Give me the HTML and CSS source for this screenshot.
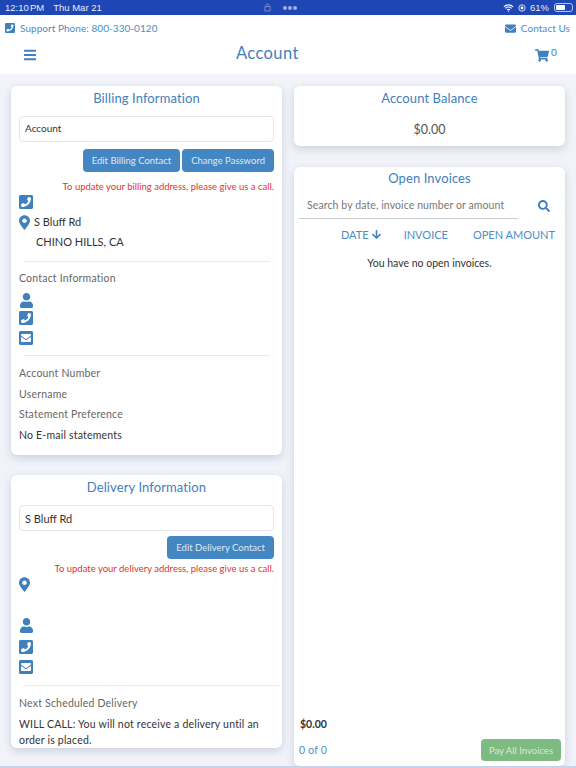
FILE: index.html
```html
<!DOCTYPE html>
<html lang="en">
  <head>
    <meta charset="UTF-8" />
    <meta name="viewport" content="width=device-width, initial-scale=1.0" />
    <title>Account</title>
    <link rel="stylesheet" href="styles.css">
  </head>
  <body>
    <svg class="icon-defs" aria-hidden="true">
      <symbol id="i-phone" viewBox="0 0 448 512"><path d="M400 32H48C21.49 32 0 53.49 0 80v352c0 26.51 21.49 48 48 48h352c26.51 0 48-21.49 48-48V80c0-26.51-21.49-48-48-48zM94 416c-7.033 0-13.057-4.873-14.616-11.627l-14.998-65a15 15 0 0 1 8.707-17.16l69.998-29.999a15 15 0 0 1 17.518 4.289l30.997 37.885c48.944-22.963 88.297-62.858 110.781-110.78l-37.886-30.997a15.001 15.001 0 0 1-4.289-17.518l30-69.998a15 15 0 0 1 17.16-8.707l65 14.998A14.997 14.997 0 0 1 384 126c0 160.292-129.945 290-290 290z"/></symbol>
      <symbol id="i-marker" viewBox="0 0 384 512"><path d="M172.268 501.67C26.97 291.031 0 260.171 0 192 0 85.961 85.961 0 192 0s192 85.961 192 192c0 68.171-26.97 99.031-172.268 309.67-9.535 13.774-29.93 13.773-39.464 0zM192 272c44.183 0 80-35.817 80-80s-35.817-80-80-80-80 35.817-80 80 35.817 80 80 80z"/></symbol>
      <symbol id="i-user" viewBox="0 0 448 512"><path d="M224 256c70.7 0 128-57.3 128-128S294.7 0 224 0 96 57.3 96 128s57.3 128 128 128zm89.6 32h-16.7c-22.2 10.2-46.9 16-72.9 16s-50.6-5.8-72.9-16h-16.7C60.2 288 0 348.2 0 422.4V464c0 26.5 21.5 48 48 48h352c26.5 0 48-21.5 48-48v-41.6c0-74.2-60.2-134.4-134.4-134.4z"/></symbol>
      <symbol id="i-mail-square" viewBox="0 0 448 512"><path d="M400 32H48C21.49 32 0 53.49 0 80v352c0 26.51 21.49 48 48 48h352c26.51 0 48-21.49 48-48V80c0-26.51-21.49-48-48-48zM178.117 262.104C87.429 196.287 88.353 196.121 64 177.167V152c0-13.255 10.745-24 24-24h272c13.255 0 24 10.745 24 24v25.167c-24.319 18.93-23.406 19.12-114.117 84.937-10.5 7.655-31.392 26.12-45.883 25.894-14.503.218-35.367-18.227-45.883-25.894zM384 217.775V360c0 13.255-10.745 24-24 24H88c-13.255 0-24-10.745-24-24V217.775c13.958 10.794 33.329 25.236 95.303 70.214 14.162 10.341 37.975 32.145 64.694 32.01 26.887.134 51.037-22.041 64.72-32.025 61.958-44.965 81.325-59.406 95.283-70.199z"/></symbol>
      <symbol id="i-mail" viewBox="0 0 512 512"><path d="M502.3 190.8c3.9-3.1 9.7-.2 9.7 4.7V400c0 26.5-21.5 48-48 48H48c-26.5 0-48-21.5-48-48V195.6c0-5 5.7-7.8 9.7-4.7 22.4 17.4 52.1 39.5 154.1 113.6 21.1 15.4 56.7 47.8 92.2 47.6 35.7.3 72-32.8 92.3-47.6 102-74.1 131.6-96.3 154-113.7zM256 320c23.2.4 56.6-29.2 73.4-41.4 132.7-96.3 142.8-104.7 173.4-128.7 5.8-4.5 9.2-11.5 9.2-18.9v-19c0-26.5-21.5-48-48-48H48C21.5 64 0 85.5 0 112v19c0 7.4 3.4 14.3 9.2 18.9 30.6 23.9 40.7 32.4 173.4 128.7 16.8 12.2 50.2 41.8 73.4 41.4z"/></symbol>
      <symbol id="i-cart" viewBox="0 0 576 512"><path d="M528.12 301.319l47.273-208C578.806 78.301 567.391 64 551.99 64H159.208l-9.166-44.81C147.758 8.021 137.93 0 126.529 0H24C10.745 0 0 10.745 0 24v16c0 13.255 10.745 24 24 24h69.883l70.248 343.435C147.325 417.1 136 435.222 136 456c0 30.928 25.072 56 56 56s56-25.072 56-56c0-15.674-6.447-29.835-16.824-40h209.647C430.447 426.165 424 440.326 424 456c0 30.928 25.072 56 56 56s56-25.072 56-56c0-22.172-12.888-41.332-31.579-50.405l5.517-24.276c3.413-15.018-8.002-29.319-23.403-29.319H218.117l-6.545-32h293.145c11.206 0 20.92-7.754 23.403-18.681z"/></symbol>
      <symbol id="i-search" viewBox="0 0 512 512"><path d="M505 442.7L405.3 343c-4.5-4.5-10.6-7-17-7H372c27.6-35.3 44-79.7 44-128C416 93.1 322.9 0 208 0S0 93.1 0 208s93.1 208 208 208c48.3 0 92.7-16.4 128-44v16.3c0 6.4 2.5 12.5 7 17l99.7 99.7c9.4 9.4 24.6 9.4 33.9 0l28.3-28.3c9.4-9.4 9.4-24.6.1-34zM208 336c-70.7 0-128-57.2-128-128 0-70.7 57.2-128 128-128 70.7 0 128 57.2 128 128 0 70.7-57.2 128-128 128z"/></symbol>
      <symbol id="i-bars" viewBox="0 0 448 512"><path d="M16 132h416c8.837 0 16-7.163 16-16V76c0-8.837-7.163-16-16-16H16C7.163 60 0 67.163 0 76v40c0 8.837 7.163 16 16 16zm0 160h416c8.837 0 16-7.163 16-16v-40c0-8.837-7.163-16-16-16H16c-8.837 0-16 7.163-16 16v40c0 8.837 7.163 16 16 16zm0 160h416c8.837 0 16-7.163 16-16v-40c0-8.837-7.163-16-16-16H16c-8.837 0-16 7.163-16 16v40c0 8.837 7.163 16 16 16z"/></symbol>
      <symbol id="i-arrow" viewBox="0 0 448 512"><path d="M413.1 222.5l22.2 22.2c9.4 9.4 9.4 24.6 0 33.9L241 473c-9.4 9.4-24.6 9.4-33.9 0L12.7 278.6c-9.4-9.4-9.4-24.6 0-33.9l22.2-22.2c9.5-9.5 25-9.3 34.3.4L184 343.4V56c0-13.3 10.7-24 24-24h32c13.3 0 24 10.7 24 24v287.4l114.8-120.5c9.3-9.8 24.8-10 34.3-.4z"/></symbol>
    </svg>

    <div class="status-bar">
      <div class="status-time"><span class="clock">12:10 PM</span><span>Thu Mar 21</span></div>
      <div class="status-mid">
        <svg class="status-lock" viewBox="0 0 8 10"><path d="M1 4h6v5H1z M2.3 4V2.6a1.7 1.7 0 0 1 3.4 0V4" fill="none" stroke="#7f93d6" stroke-width="1"/></svg>
        <span class="status-dots"><i></i><i></i><i></i></span>
      </div>
      <div class="status-right">
        <svg class="status-wifi" viewBox="0 0 16 12"><path d="M1 4.2a10 10 0 0 1 14 0M3.4 6.6a6.6 6.6 0 0 1 9.2 0M5.7 8.9a3.3 3.3 0 0 1 4.6 0" fill="none" stroke="#fff" stroke-width="1.6"/><path d="M8 12l-1.4-1.6a2 2 0 0 1 2.8 0z" fill="#fff"/></svg>
        <svg class="status-rotate" viewBox="0 0 10 10"><circle cx="5" cy="5" r="4" fill="none" stroke="#fff" stroke-width="1"/><circle cx="5" cy="5" r="1.8" fill="#fff"/></svg>
        <span>61%</span>
        <span class="battery"><span class="battery-fill"></span></span>
      </div>
    </div>

    <header class="top">
      <div class="support-row">
        <a class="support"><svg class="ico ico-sm"><use href="#i-phone"/></svg>Support Phone: 800-330-0120</a>
        <a class="support"><svg class="ico ico-mail"><use href="#i-mail"/></svg>Contact Us</a>
      </div>
      <div class="title-row">
        <svg class="ico ico-bars"><use href="#i-bars"/></svg>
        <h1>Account</h1>
        <div class="cart"><svg class="ico ico-cart"><use href="#i-cart"/></svg><span>0</span></div>
      </div>
    </header>

    <main class="columns">
      <div class="col">
        <section class="card card-billing">
          <h2>Billing Information</h2>
          <div class="field field-billing">Account</div>
          <div class="btn-row">
            <button class="btn">Edit Billing Contact</button>
            <button class="btn">Change Password</button>
          </div>
          <p class="notice">To update your billing address, please give us a call.</p>
          <div class="r-phone1"><svg class="ico ico-square"><use href="#i-phone"/></svg></div>
          <div class="address-row"><svg class="ico ico-marker"><use href="#i-marker"/></svg><span>S Bluff Rd</span></div>
          <div class="city">CHINO HILLS, CA</div>
          <hr class="rule rule-a" />
          <div class="label label-contact">Contact Information</div>
          <div class="icon-stack">
            <svg class="ico ico-user"><use href="#i-user"/></svg>
            <svg class="ico ico-square"><use href="#i-phone"/></svg>
            <svg class="ico ico-square"><use href="#i-mail-square"/></svg>
          </div>
          <hr class="rule rule-b" />
          <div class="label-list">
            <div class="label">Account Number</div>
            <div class="label">Username</div>
            <div class="label">Statement Preference</div>
            <div class="value">No E-mail statements</div>
          </div>
        </section>

        <section class="card card-delivery">
          <h2>Delivery Information</h2>
          <div class="field field-delivery">S Bluff Rd</div>
          <div class="btn-row btn-row-delivery">
            <button class="btn">Edit Delivery Contact</button>
          </div>
          <p class="notice notice-delivery">To update your delivery address, please give us a call.</p>
          <div class="r-marker"><svg class="ico ico-marker"><use href="#i-marker"/></svg></div>
          <div class="icon-stack stack-delivery">
            <svg class="ico ico-user"><use href="#i-user"/></svg>
            <svg class="ico ico-square"><use href="#i-phone"/></svg>
            <svg class="ico ico-square"><use href="#i-mail-square"/></svg>
          </div>
          <hr class="rule rule-c" />
          <div class="label label-next">Next Scheduled Delivery</div>
          <p class="will-call">WILL CALL: You will not receive a delivery until an order is placed.</p>
        </section>
      </div>

      <div class="col">
        <section class="card card-balance">
          <h2>Account Balance</h2>
          <div class="balance">$0.00</div>
        </section>

        <section class="card card-invoices">
          <h2>Open Invoices</h2>
          <div class="search-row">
            <div class="search-box">Search by date, invoice number or amount</div>
            <svg class="ico ico-search"><use href="#i-search"/></svg>
          </div>
          <div class="table-head">
            <span class="th-date">DATE <svg class="ico ico-arrow"><use href="#i-arrow"/></svg></span>
            <span>INVOICE</span>
            <span>OPEN AMOUNT</span>
          </div>
          <p class="empty">You have no open invoices.</p>
          <div class="invoice-foot">
            <div class="total">$0.00</div>
            <div class="foot-row">
              <span class="count">0 of 0</span>
              <button class="btn btn-pay">Pay All Invoices</button>
            </div>
          </div>
        </section>
      </div>
    </main>
  </body>
</html>
```

FILE: styles.css
```css
* {
  margin: 0;
  padding: 0;
  box-sizing: border-box;
}

html,
body {
  height: 100%;
  overflow: hidden;
}

body {
  display: flex;
  flex-direction: column;
  font-family: "Lato", "Liberation Sans", sans-serif;
  font-size: 10.5px;
  letter-spacing: 0.2px;
  color: #333;
  background-color: #f1f3f9;
  border-bottom: 2px solid #c9d3ee;
}

.icon-defs {
  display: none;
}

.ico {
  display: block;
  fill: #3f80bd;
  flex: none;
}

/* ios status bar */
.status-bar {
  display: grid;
  grid-template-columns: 1fr auto 1fr;
  align-items: center;
  flex: none;
  height: 15px;
  padding: 0 3px 0 5px;
  background-color: #1e46b4;
  color: #e8ecf8;
  font-family: "Liberation Sans", sans-serif;
  font-size: 9.5px;
  letter-spacing: 0;
}

.status-time {
  display: flex;
  gap: 9px;
}

.clock {
  word-spacing: -1.5px;
}

.status-mid {
  display: flex;
  align-items: center;
  gap: 12px;
  margin-right: 18px;
}

.status-lock {
  width: 7px;
  height: 9px;
}

.status-dots {
  display: flex;
  gap: 1px;
}

.status-dots i {
  width: 4px;
  height: 4px;
  border-radius: 50%;
  background-color: #9fb0e2;
}

.status-right {
  display: flex;
  justify-content: flex-end;
  align-items: center;
  gap: 4px;
}

.status-wifi {
  width: 11px;
  height: 8px;
}

.status-rotate {
  width: 8px;
  height: 8px;
}

.battery {
  display: block;
  width: 19px;
  height: 9px;
  margin-left: 1px;
  padding: 1px;
  border: 1px solid #b9c5ea;
  border-radius: 3px;
}

.battery-fill {
  display: block;
  width: 62%;
  height: 100%;
  border-radius: 1px;
  background-color: #fff;
}

/* header */
.top {
  height: 59px;
  background-color: #fff;
  flex: none;
}

.support-row {
  display: flex;
  justify-content: space-between;
  padding: 7px 6px 0 5px;
  height: 24px;
}

.support {
  display: flex;
  align-items: center;
  gap: 5px;
  height: 12px;
  color: #4f8cc4;
  font-size: 10px;
  letter-spacing: 0.05px;
}

.ico-sm {
  width: 10px;
  height: 12px;
}

.ico-mail {
  width: 11px;
  height: 11px;
}

.title-row {
  display: grid;
  grid-template-columns: 212px auto 1fr;
  align-items: center;
  padding: 0 19px 0 24px;
  height: 28px;
}

.title-row h1 {
  font-size: 16.5px;
  font-weight: 400;
  letter-spacing: 0.4px;
  color: #3f80bd;
}

.ico-bars {
  width: 12px;
  height: 14px;
  margin-top: 4px;
}

.cart {
  display: flex;
  justify-content: flex-end;
  align-items: flex-start;
  gap: 2px;
  margin-top: 4px;
  color: #3f80bd;
  font-size: 10px;
}

.cart span {
  margin-top: -3px;
}

.ico-cart {
  width: 14px;
  height: 13px;
}

/* columns */
.columns {
  flex: 1;
  display: grid;
  grid-template-columns: 271px 271px;
  gap: 12px;
  padding: 12px 11px 0;
  min-height: 0;
}

.col {
  display: flex;
  flex-direction: column;
  gap: 20px;
  min-height: 0;
}

.card {
  background-color: #fff;
  border-radius: 6px;
  box-shadow: 0 3px 8px rgba(60, 70, 110, 0.2);
  padding: 0 8px;
}

.card h2 {
  height: 24px;
  padding-top: 4px;
  text-align: center;
  font-size: 13px;
  font-weight: 400;
  letter-spacing: 0.1px;
  color: #3f80bd;
}

.card-billing {
  height: 369px;
}

.card-delivery {
  height: 273px;
}

.field {
  height: 26px;
  margin-top: 6px;
  padding: 5px;
  border: 1px solid #e4e6ea;
  border-radius: 4px;
  letter-spacing: 0;
}

.field-billing {
  font-size: 10px;
}

.field-delivery {
  font-size: 11px;
  padding-top: 6px;
}

.btn-row {
  display: flex;
  justify-content: flex-end;
  gap: 2px;
  margin-top: 7px;
}

.btn-row-delivery {
  margin-top: 5px;
}

.btn {
  height: 23px;
  padding: 0 9px;
  border: none;
  border-radius: 4px;
  background-color: #4386c2;
  color: #dfeaf5;
  font-family: inherit;
  font-size: 9.5px;
  letter-spacing: 0;
}

.notice {
  margin-top: 9px;
  height: 14px;
  text-align: right;
  font-size: 9.5px;
  letter-spacing: 0;
  color: #e2322f;
}

.notice-delivery {
  margin-top: 4px;
}

.ico-square {
  width: 14px;
  height: 16px;
}

.ico-user {
  width: 13px;
  height: 15px;
  margin-left: 1px;
  margin-bottom: -2px;
}

.ico-marker {
  width: 11px;
  height: 15px;
}

.r-phone1 {
  margin-top: -1px;
  height: 16px;
}

.address-row {
  display: flex;
  align-items: center;
  gap: 4px;
  margin-top: 5px;
  height: 15px;
  font-size: 11px;
  letter-spacing: 0;
}

.address-row span {
  padding-bottom: 2px;
}

.city {
  margin-top: 5px;
  margin-left: 17px;
  height: 14px;
  font-size: 11px;
  letter-spacing: 0;
}

.rule {
  border: none;
  height: 1px;
  background-color: #e8e9ec;
}

.rule-a {
  margin: 12px 4px 0 5px;
}

.label {
  color: #666;
}

.label-contact {
  margin-top: 10px;
  height: 13px;
}

.icon-stack {
  display: flex;
  flex-direction: column;
  gap: 4px;
  margin-top: 8px;
}

.rule-b {
  margin: 9px 5px 0;
}

.label-list {
  display: flex;
  flex-direction: column;
  gap: 7.1px;
  margin-top: 11px;
}

.label-list .label,
.label-list .value {
  height: 13.6px;
}

.r-marker {
  height: 15px;
}

.stack-delivery {
  margin-top: 26px;
}

.stack-delivery .ico-user {
  margin-bottom: 2px;
}

.rule-c {
  margin: 10px -6px 0 5px;
}

.label-next {
  margin-top: 11px;
  height: 13px;
}

.will-call {
  margin-top: 7px;
  line-height: 15.5px;
}

.card-balance {
  height: 60px;
}

.balance {
  margin-top: 12px;
  text-align: center;
  font-size: 12.5px;
  letter-spacing: 0;
  color: #555;
}

.card-invoices {
  flex: 1;
  display: flex;
  flex-direction: column;
  margin-top: 1px;
  padding: 0 5px;
  min-height: 0;
}

.card-invoices h2 {
  padding-top: 3px;
}

.search-row {
  display: flex;
  align-items: center;
  gap: 20px;
  margin-top: 3px;
}

.search-box {
  width: 219px;
  height: 25px;
  padding: 5px 8px;
  border-bottom: 1px solid #c8ccd0;
  color: #777;
  letter-spacing: 0.1px;
  white-space: nowrap;
}

.ico-search {
  width: 12px;
  height: 12px;
  margin-top: -2px;
}

.table-head {
  display: flex;
  justify-content: flex-end;
  gap: 25px;
  margin-top: 9px;
  padding-right: 5px;
  color: #4f8cc4;
  font-size: 11px;
  letter-spacing: 0;
}

.table-head .th-date {
  display: flex;
  align-items: center;
  gap: 3px;
  margin-right: -2px;
}

.ico-arrow {
  width: 9px;
  height: 11px;
}

.empty {
  margin-top: 16px;
  text-align: center;
  letter-spacing: 0;
}

.invoice-foot {
  margin-top: auto;
  padding-bottom: 5px;
}

.total {
  margin-left: 1px;
  font-weight: 700;
  letter-spacing: 0;
}

.foot-row {
  display: flex;
  justify-content: space-between;
  align-items: center;
  margin-top: 9px;
}

.count {
  color: #4f8cc4;
}

.btn-pay {
  height: 22px;
  padding: 0 8px;
  margin-right: -1px;
  background-color: #7dbb83;
  color: #d5ebd5;
}
```
